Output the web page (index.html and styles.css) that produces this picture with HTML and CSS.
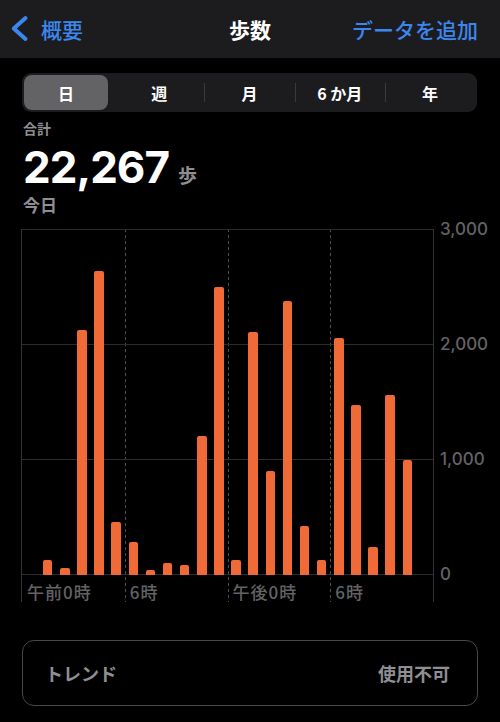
FILE: index.html
```html
<!DOCTYPE html>
<html lang="ja">
<head>
<meta charset="utf-8">
<link rel="stylesheet" href="styles.css">
</head>
<body>
<header class="nav">
  <div class="nav-left">
    <svg class="chev" width="20" height="30" viewBox="0 0 20 30"><polyline points="15.5,3 3.8,13.5 15.5,24" fill="none" stroke="#3b87ee" stroke-width="4" stroke-linecap="round" stroke-linejoin="round"/></svg>
    <span class="back">概要</span>
  </div>
  <div class="nav-title">歩数</div>
  <div class="nav-right">データを追加</div>
</header>

<div class="seg">
  <div class="seg-item first"><div class="thumb">日</div></div>
  <div class="seg-item">週</div>
  <div class="seg-item div">月</div>
  <div class="seg-item div">6 か月</div>
  <div class="seg-item div">年</div>
</div>

<div class="summary">
  <div class="label">合計</div>
  <div class="total"><span class="num">22,267</span><span class="unit">歩</span></div>
  <div class="date">今日</div>
</div>

<div class="chart">
  <div class="plot">
    <div class="sec">
      <div class="bars">
        <div class="slot"></div>
        <div class="slot"><div class="bar" style="height:15px"></div></div>
        <div class="slot"><div class="bar" style="height:7px"></div></div>
        <div class="slot"><div class="bar" style="height:245px"></div></div>
        <div class="slot"><div class="bar" style="height:304px"></div></div>
        <div class="slot"><div class="bar" style="height:53px"></div></div>
      </div>
      <div class="xlab">午前0時</div>
    </div>
    <div class="sec dot">
      <div class="bars">
        <div class="slot"><div class="bar" style="height:33px"></div></div>
        <div class="slot"><div class="bar" style="height:5px"></div></div>
        <div class="slot"><div class="bar" style="height:12px"></div></div>
        <div class="slot"><div class="bar" style="height:10px"></div></div>
        <div class="slot"><div class="bar" style="height:139px"></div></div>
        <div class="slot"><div class="bar" style="height:288px"></div></div>
      </div>
      <div class="xlab">6時</div>
    </div>
    <div class="sec dot">
      <div class="bars">
        <div class="slot"><div class="bar" style="height:15px"></div></div>
        <div class="slot"><div class="bar" style="height:243px"></div></div>
        <div class="slot"><div class="bar" style="height:104px"></div></div>
        <div class="slot"><div class="bar" style="height:274px"></div></div>
        <div class="slot"><div class="bar" style="height:49px"></div></div>
        <div class="slot"><div class="bar" style="height:15px"></div></div>
      </div>
      <div class="xlab">午後0時</div>
    </div>
    <div class="sec dot">
      <div class="bars">
        <div class="slot"><div class="bar" style="height:237px"></div></div>
        <div class="slot"><div class="bar" style="height:170px"></div></div>
        <div class="slot"><div class="bar" style="height:28px"></div></div>
        <div class="slot"><div class="bar" style="height:180px"></div></div>
        <div class="slot"><div class="bar" style="height:115px"></div></div>
        <div class="slot"></div>
      </div>
      <div class="xlab">6時</div>
    </div>
  </div>
  <div class="yaxis">
    <div class="ylab">3,000</div>
    <div class="ylab">2,000</div>
    <div class="ylab">1,000</div>
    <div class="ylab">0</div>
  </div>
</div>

<div class="trend">
  <span class="trend-name">トレンド</span>
  <span class="trend-val">使用不可</span>
</div>
</body>
</html>
```

FILE: styles.css
```css
* { box-sizing: border-box; }
html, body { margin: 0; padding: 0; }
body {
  width: 500px;
  height: 722px;
  overflow: hidden;
  background: #000;
  color: #fff;
  font-family: "Noto Sans CJK JP", "Inter", sans-serif;
}

.nav {
  height: 58px;
  background: #1c1c1e;
  display: grid;
  grid-template-columns: 1fr auto 1fr;
  align-items: center;
  padding: 0 22px;
}
.nav-left {
  display: flex;
  align-items: center;
  color: #3b87ee;
  font-size: 21px;
  font-weight: 500;
  margin-left: -12px;
}
.chev { display: block; margin-right: 11px; margin-top: 1px; }
.back { line-height: 30px; }
.nav-title {
  font-size: 21px;
  font-weight: 700;
  color: #fff;
}
.nav-right {
  justify-self: end;
  color: #3b87ee;
  font-size: 21px;
  font-weight: 500;
}

.seg {
  margin: 15px 23px 0 22px;
  height: 39px;
  background: #1c1c1e;
  border-radius: 9px;
  padding: 2px;
  display: flex;
}
.seg-item {
  flex: 1;
  display: flex;
  align-items: center;
  justify-content: center;
  font-size: 16px;
  font-weight: 700;
  color: #fff;
  position: relative;
  white-space: pre;
}
.seg-item.first { justify-content: flex-start; }
.thumb {
  width: 84px;
  height: 35px;
  background: #636366;
  border-radius: 8px;
  display: flex;
  align-items: center;
  justify-content: center;
}
.seg-item.div::before {
  content: "";
  position: absolute;
  left: 0;
  top: 8px;
  width: 1px;
  height: 19px;
  background: #3a3a3c;
}

.summary { padding: 7px 0 0 23px; }
.label {
  font-size: 14px;
  line-height: 18px;
  font-weight: 700;
  color: #8e8e93;
}
.total {
  display: flex;
  align-items: baseline;
  margin-top: 6px;
  height: 48px;
}
.num {
  font-family: "Inter", sans-serif;
  font-size: 44px;
  line-height: 48px;
  font-weight: 700;
  letter-spacing: -1px;
  color: #fff;
}
.unit {
  font-size: 19px;
  font-weight: 700;
  color: #8e8e93;
  margin-left: 9px;
}
.date {
  font-size: 17px;
  line-height: 22px;
  font-weight: 700;
  color: #8e8e93;
  margin-top: 3px;
}

.chart {
  display: flex;
  align-items: flex-start;
  margin: 13px 0 0 21px;
}
.plot {
  width: 413px;
  height: 373px;
  display: flex;
  border-left: 1px solid #333335;
  border-right: 1px solid #333335;
}
.sec {
  flex: 1;
  display: flex;
  flex-direction: column;
}
.sec.dot {
  background-image: repeating-linear-gradient(to bottom, #505052 0 3px, transparent 3px 6px);
  background-size: 1px 100%;
  background-repeat: no-repeat;
  background-position: left top;
}
.bars {
  height: 346px;
  display: flex;
  align-items: flex-end;
  background-image: linear-gradient(to bottom, #2c2c2e 0 1px, transparent 1px);
  background-size: 100% 115px;
  background-repeat: repeat-y;
}
.slot {
  flex: 1;
  display: flex;
  justify-content: center;
  align-items: flex-end;
}
.bar {
  width: 9.6px;
  background: #ef6a36;
  border-radius: 2px 2px 0 0;
}
.xlab {
  font-size: 17px;
  line-height: 20px;
  padding: 7px 0 0 5px;
  color: #636366;
  font-weight: 500;
  letter-spacing: 1px;
  white-space: nowrap;
}
.yaxis {
  display: flex;
  flex-direction: column;
  margin-top: -10px;
  padding-left: 6px;
}
.ylab {
  height: 115px;
  line-height: 20px;
  font-family: "Inter", sans-serif;
  font-size: 17px;
  font-weight: 500;
  color: #636366;
}
.ylab:last-child { height: 20px; }

.trend {
  margin: 38px 22px 0 22px;
  height: 66px;
  border: 1.5px solid #48484a;
  border-radius: 12px;
  display: flex;
  align-items: center;
  justify-content: space-between;
  padding: 0 27px 0 22px;
  font-size: 18px;
  font-weight: 700;
  color: #8e8e93;
}
```
